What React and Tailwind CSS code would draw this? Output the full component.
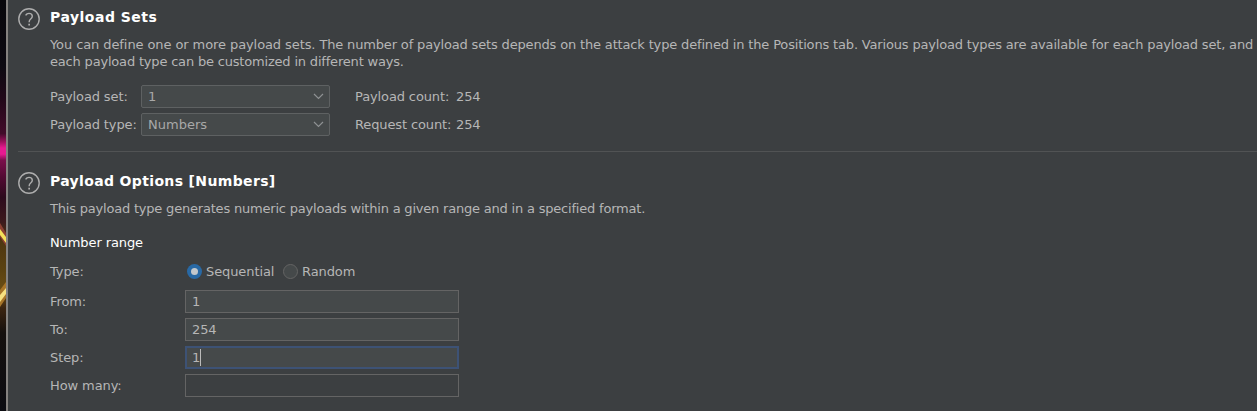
import React from "react";

function HelpIcon() {
  return (
    <svg className="h-[22px] w-[22px] shrink-0" viewBox="0 0 22 22" fill="none">
      <circle cx="11" cy="11" r="10.2" stroke="#adadad" strokeWidth="1.4" />
      <path d="M7.6 7.4C8.4 6 9.5 5.4 11 5.4c2 0 3.3 1.2 3.3 2.9 0 1.1-.6 1.9-1.6 2.7-1.1.9-1.5 1.5-1.5 2.7v.5" stroke="#adadad" strokeWidth="1.4" />
      <path d="M10.3 15.8h1.7v1.8h-1.7z" fill="#adadad" />
    </svg>
  );
}

function Combo({ value }) {
  return (
    <div className="flex h-[23px] w-[189px] items-center justify-between rounded-[2px] border border-[#5e6162] bg-[#45494a] pl-[6px] pr-[5px]">
      <span className="tracking-normal text-[#a8a8a8]">{value}</span>
      <svg className="h-[7px] w-[11px]" viewBox="0 0 11 7" fill="none">
        <path d="M1 1l4.5 4.5L10 1" stroke="#8e9193" strokeWidth="1.2" />
      </svg>
    </div>
  );
}

function SetRow({ label, value, count }) {
  return (
    <div className="flex h-[23px] items-center whitespace-nowrap tracking-[-0.12px]">
      <span className="w-[91px]">{label}</span>
      <Combo value={value} />
      <span className="ml-[25px] w-[101px]">{count}</span>
      <span>254</span>
    </div>
  );
}

function Field({ label, value, focused, empty }) {
  return (
    <div className="flex h-[23px] items-center tracking-[-0.1px]">
      <span className="w-[135px]">{label}</span>
      <div
        className={
          "flex h-[23px] w-[274px] items-center " +
          (focused
            ? "border-2 border-[#3d5275] bg-[#45494a] pl-[5px]"
            : empty
              ? "border border-[#646464] bg-[#3c3f41] pl-[6px]"
              : "border border-[#646464] bg-[#45494a] pl-[6px]")
        }
      >
        <span>{value}</span>
        {focused && <span className="h-[17px] w-px bg-[#bbbbbb]" />}
      </div>
    </div>
  );
}

function Backdrop() {
  return (
    <svg className="h-[411px] w-[6px] shrink-0" viewBox="0 0 6 411" preserveAspectRatio="none">
      <defs>
        <linearGradient id="bd" x1="0" y1="0" x2="0" y2="1">
          <stop offset="0" stopColor="#08070b" />
          <stop offset=".16" stopColor="#0d0a12" />
          <stop offset=".24" stopColor="#220819" />
          <stop offset=".325" stopColor="#420b2a" />
          <stop offset=".345" stopColor="#a0105f" />
          <stop offset=".36" stopColor="#e81a91" />
          <stop offset=".375" stopColor="#e81a91" />
          <stop offset=".39" stopColor="#7a0f4b" />
          <stop offset=".43" stopColor="#530a33" />
          <stop offset=".48" stopColor="#2d0b1d" />
          <stop offset=".54" stopColor="#3d1a1c" />
          <stop offset=".58" stopColor="#4d3511" />
          <stop offset=".66" stopColor="#5c4310" />
          <stop offset=".71" stopColor="#6c4e15" />
          <stop offset=".75" stopColor="#3b2410" />
          <stop offset=".81" stopColor="#15100e" />
          <stop offset="1" stopColor="#0c0c12" />
        </linearGradient>
      </defs>
      <rect width="6" height="411" fill="url(#bd)" />
      <path d="M0 223l6 10v13l-6-9z" fill="#8b4032" />
      <path d="M0 229l6 8v6l-6-8z" fill="#f4e05a" />
      <path d="M0 290l6-8v16l-6 9z" fill="#a87528" />
      <path d="M0 295l6-7v6l-6 8z" fill="#f6e080" />
    </svg>
  );
}

export default function App() {
  return (
    <div className="flex h-[411px] w-[1257px] overflow-hidden bg-[#3c3f41] font-['DejaVu_Sans',sans-serif] text-[13px] leading-[17px] text-[#b6b6b6]">
      <Backdrop />
      <div className="w-[2px] shrink-0 bg-[#858280]" />
      <main className="flex min-w-0 flex-1 flex-col pl-[10px]">
        <section className="flex h-[151px] gap-[10px] pt-[8px]">
          <HelpIcon />
          <div className="flex flex-col">
            <h2 className="h-[17px] whitespace-nowrap pt-px text-[14px] font-bold tracking-[0.5px] text-white">Payload Sets</h2>
            <p className="mt-[11px] whitespace-nowrap">
              <span className="tracking-[-0.09px]">You can define one or more payload sets. </span>
              <span className="tracking-[-0.16px]">The number of payload sets depends on the attack type defined in the Positions tab. </span>
              <span className="tracking-[-0.17px]">Various payload types are available for each payload set, and</span>
              <br />
              <span className="tracking-[-0.185px]">each payload type can be customized in different ways.</span>
            </p>
            <div className="mt-[15px] flex flex-col gap-[5px]">
              <SetRow label="Payload set:" value="1" count="Payload count:" />
              <SetRow label="Payload type:" value="Numbers" count="Request count:" />
            </div>
          </div>
        </section>
        <div className="h-px shrink-0 bg-[#515354]" />
        <section className="flex gap-[10px] pt-[20px]">
          <HelpIcon />
          <div className="flex flex-col whitespace-nowrap">
            <h2 className="h-[17px] pt-px text-[14px] font-bold tracking-[0.35px] text-white">Payload Options [Numbers]</h2>
            <p className="mt-[11px] tracking-[-0.2px]">This payload type generates numeric payloads within a given range and in a specified format.</p>
            <h3 className="mt-[17px] tracking-[-0.1px] text-white">Number range</h3>
            <div className="mt-[12px] flex h-[17px] items-center tracking-[-0.1px]">
              <span className="w-[137px]">Type:</span>
              <span className="flex h-[15px] w-[15px] items-center justify-center rounded-full bg-[#2869a5]">
                <span className="h-[7px] w-[7px] rounded-full bg-[#c3c8cc]" />
              </span>
              <span className="ml-[4px] w-[77px]">Sequential</span>
              <span className="h-[15px] w-[15px] rounded-full border border-[#646464] bg-[#45494a]" />
              <span className="ml-[4px]">Random</span>
            </div>
            <div className="mt-[10px] flex flex-col gap-[5px]">
              <Field label="From:" value="1" />
              <Field label="To:" value="254" />
              <Field label="Step:" value="1" focused />
              <Field label="How many:" value="" empty />
            </div>
          </div>
        </section>
      </main>
    </div>
  );
}
